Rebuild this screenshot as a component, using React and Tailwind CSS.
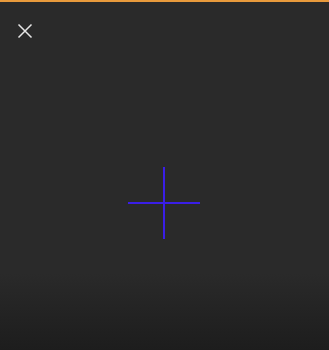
export default function App() {
  return (
    <div className="w-[329px] h-[350px] flex flex-col bg-[#2a2a2a] overflow-hidden">
      <div className="h-[2px] bg-[#e89a3c]" />
      <div className="flex-1 flex flex-col bg-gradient-to-b from-[#2a2a2a] from-[78%] to-[#1d1d1d]">
        <div className="pl-[17px] pt-[21px]">
          <svg width="16" height="16" viewBox="0 0 16 16" fill="none">
            <path d="M1.5 1.5L14.5 14.5M14.5 1.5L1.5 14.5" stroke="#e6e6e6" strokeWidth="1.5" />
          </svg>
        </div>
        <div className="flex justify-center pt-[128px]">
          <svg width="72" height="72" viewBox="0 0 72 72" className="ml-[-1px]">
            <rect x="35" y="0" width="2" height="72" fill="#3a1ee6" />
            <rect x="0" y="35" width="72" height="2" fill="#3a1ee6" />
          </svg>
        </div>
      </div>
    </div>
  );
}
